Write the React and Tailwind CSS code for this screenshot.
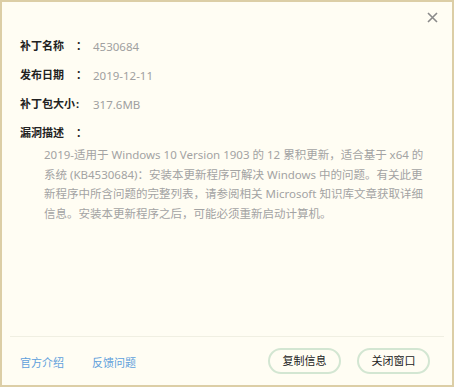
export default function App() {
  const rows = [
    { label: "补丁名称", colon: "：", value: "4530684" },
    { label: "发布日期", colon: "：", value: "2019-12-11" },
    { label: "补丁包大小", colon: ":", value: "317.6MB" },
  ];

  const desc = [
    "2019-适用于 Windows 10 Version 1903 的 12 累积更新，适合基于 x64 的",
    "系统 (KB4530684)：安装本更新程序可解决 Windows 中的问题。有关此更",
    "新程序中所含问题的完整列表，请参阅相关 Microsoft 知识库文章获取详细",
    "信息。安装本更新程序之后，可能必须重新启动计算机。",
  ];

  return (
    <div className="w-[454px] h-[387px] bg-[#fffdf3] border-2 border-[#dccea6] flex flex-col font-['Noto_Sans','Noto_Sans_CJK_SC',sans-serif] text-[11px]">
      <div className="flex justify-end pt-[7px] pr-[12px] h-[30px]">
        <button className="w-[16px] h-[16px] flex items-center justify-center">
          <svg width="11" height="11" viewBox="0 0 11 11">
            <path d="M1 1L10 10M10 1L1 10" stroke="#8a8a8a" strokeWidth="1.6" />
          </svg>
        </button>
      </div>

      <div className="flex flex-col px-[18px]">
        {rows.map((r) => (
          <div key={r.label} className="flex items-center h-[29px] whitespace-nowrap">
            <span className="font-bold text-[#222] w-[56px]">{r.label}</span>
            <span className="font-bold text-[#222] w-[17px]">{r.colon}</span>
            <span className="text-[#a0a0a0] text-[11.5px]">{r.value}</span>
          </div>
        ))}
        <div className="flex items-center h-[29px] whitespace-nowrap">
          <span className="font-bold text-[#222] w-[56px]">漏洞描述</span>
          <span className="font-bold text-[#222]">：</span>
        </div>
        <div className="pl-[24px] text-[#a3a3a3] text-[11.5px] leading-[19.5px] -mt-[3px]">
          {desc.map((l) => (
            <div key={l} className="whitespace-nowrap">{l}</div>
          ))}
        </div>
      </div>

      <div className="mt-auto mx-[8px] border-t border-[#f0efe2]" />
      <div className="flex items-center justify-between pl-[18px] pr-[22px] h-[48px]">
        <div className="flex gap-[28px] text-[#5ea0dc] pt-[4px]">
          <a>官方介绍</a>
          <a>反馈问题</a>
        </div>
        <div className="flex gap-[16px]">
          <button className="w-[73px] h-[26px] rounded-full border-2 border-[#d3e6d2] text-[#222] bg-[#fffdf3]">复制信息</button>
          <button className="w-[73px] h-[26px] rounded-full border-2 border-[#d3e6d2] text-[#222] bg-[#fffdf3]">关闭窗口</button>
        </div>
      </div>
    </div>
  );
}
